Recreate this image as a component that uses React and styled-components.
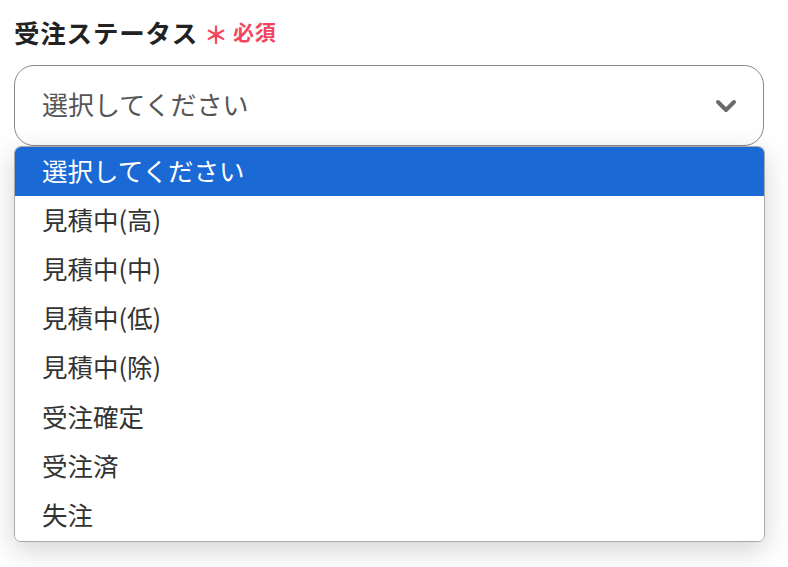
import React from 'react';
import styled, { createGlobalStyle } from 'styled-components';

const GlobalStyle = createGlobalStyle`
  html, body {
    margin: 0;
    padding: 0;
    background: #fff;
    font-family: "Noto Sans CJK JP", "Noto Sans", sans-serif;
  }
`;

const Page = styled.div`
  width: 788px;
  height: 567px;
  box-sizing: border-box;
  padding: 12px 24px 0 14px;
  overflow: hidden;
  position: relative;
`;

const Label = styled.div`
  display: flex;
  align-items: center;
  height: 38px;
  font-size: 25.5px;
  font-weight: 700;
  color: #222;
  letter-spacing: 0.8px;
`;

const Required = styled.span`
  display: inline-flex;
  align-items: center;
  margin-left: 6px;
  color: #f2465e;
  font-size: 21px;
  font-weight: 700;
`;

const Asterisk = styled.span`
  font-size: 24px;
  font-weight: 700;
  line-height: 1;
  margin-right: 4px;
  position: relative;
  top: 3px;
`;

const Field = styled.div`
  position: relative;
  margin-top: 15px;
`;

const SelectBox = styled.div`
  height: 81px;
  box-sizing: border-box;
  border: 1px solid #8a8a8a;
  border-radius: 20px;
  display: flex;
  align-items: center;
  justify-content: space-between;
  padding: 0 26px 4px 27px;
  font-size: 26px;
  color: #555;
  background: #fff;
`;

const Chev = styled.svg`
  margin-top: 4px;
`;

const BehindButton = styled.div`
  margin-top: 233px;
  width: 200px;
  height: 36px;
  border-radius: 18px;
  background: #1a6fa8;
`;

const Menu = styled.ul`
  position: absolute;
  left: 0;
  right: -1px;
  top: 81px;
  margin: 0;
  padding: 0;
  list-style: none;
  background: #fff;
  border: 1px solid #a8a8a8;
  border-radius: 7px;
  overflow: hidden;
  box-shadow: 0 8px 28px rgba(0, 0, 0, 0.18);
`;

const Option = styled.li`
  height: 49.2px;
  box-sizing: border-box;
  display: flex;
  align-items: center;
  padding: 0 0 5px 27px;
  font-size: 25.5px;
  color: ${p => (p.$active ? '#fff' : '#333')};
  background: ${p => (p.$active ? '#1a69d4' : '#fff')};
`;

const Chevron = () => (
  <Chev width="22" height="14" viewBox="0 0 22 14">
    <path d="M3 3 L11 11 L19 3" fill="none" stroke="#6b6b6b" strokeWidth="4" strokeLinecap="round" strokeLinejoin="round" />
  </Chev>
);

const options = ['選択してください', '見積中(高)', '見積中(中)', '見積中(低)', '見積中(除)', '受注確定', '受注済', '失注'];

export default function App() {
  return (
    <Page>
      <GlobalStyle />
      <Label>
        受注ステータス
        <Required>
          <Asterisk>＊</Asterisk>必須
        </Required>
      </Label>
      <Field>
        <SelectBox>
          <span>選択してください</span>
          <Chevron />
        </SelectBox>
        <BehindButton />
        <Menu>
          {options.map((o, i) => (
            <Option key={o} $active={i === 0}>{o}</Option>
          ))}
        </Menu>
      </Field>
    </Page>
  );
}
